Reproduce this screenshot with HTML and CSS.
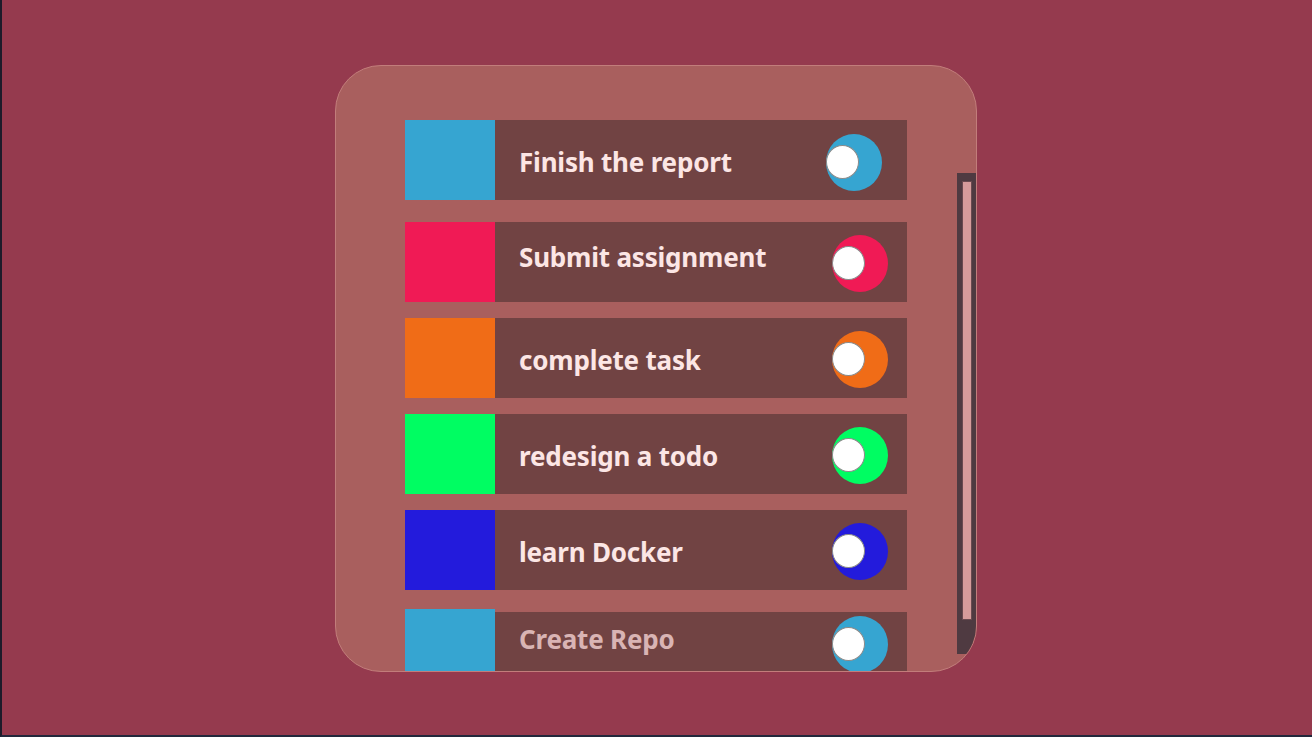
FILE: index.html
```html
<!DOCTYPE html>
<html>
<head>
<meta charset="utf-8">
<link rel="stylesheet" href="styles.css">
</head>
<body>
<div class="page">
  <div class="card">
    <div class="list">
      <div class="row first">
        <div class="swatch" style="background:#36a5d1"></div>
        <div class="label">Finish the report</div>
        <div class="toggle wide" style="background:#36a5d1"><span class="knob"></span></div>
      </div>
      <div class="row">
        <div class="swatch" style="background:#f01a55"></div>
        <div class="label up">Submit assignment</div>
        <div class="toggle" style="background:#f01a55"><span class="knob"></span></div>
      </div>
      <div class="row">
        <div class="swatch" style="background:#f06c17"></div>
        <div class="label">complete task</div>
        <div class="toggle" style="background:#f06c17"><span class="knob"></span></div>
      </div>
      <div class="row">
        <div class="swatch" style="background:#00fd62"></div>
        <div class="label">redesign a todo</div>
        <div class="toggle" style="background:#00fd62"><span class="knob"></span></div>
      </div>
      <div class="row">
        <div class="swatch" style="background:#231bdc"></div>
        <div class="label">learn Docker</div>
        <div class="toggle" style="background:#231bdc"><span class="knob"></span></div>
      </div>
      <div class="row last">
        <div class="swatch" style="background:#36a5d1"></div>
        <div class="label faded">Create Repo</div>
        <div class="toggle" style="background:#36a5d1"><span class="knob"></span></div>
      </div>
    </div>
    <div class="scrollbar"><div class="thumb"></div></div>
  </div>
</div>
</body>
</html>
```
FILE: styles.css
```css
html, body {
  margin: 0;
  padding: 0;
  height: 100%;
}
body {
  background: #953a4e;
  font-family: "Noto Sans", "Open Sans", sans-serif;
  overflow: hidden;
}
.page {
  height: 735px;
  border-left: 2px solid #1d1b2a;
  border-bottom: 2px solid #23283c;
  display: flex;
  align-items: center;
  justify-content: center;
  box-sizing: content-box;
}
.card {
  position: relative;
  width: 642px;
  height: 607px;
  margin-left: -2px;
  margin-top: 2px;
  background: #a95f5e;
  border: 1px solid #c27d7b;
  border-radius: 46px;
  overflow: hidden;
  padding: 54px 69px 0 69px;
  box-sizing: border-box;
}
.list {
  display: flex;
  flex-direction: column;
  gap: 16px;
}
.row {
  display: flex;
  align-items: center;
  height: 80px;
  background: #714343;
  flex-shrink: 0;
}
.row.first {
  margin-bottom: 6px;
}
.row.last {
  margin-top: 6px;
  align-items: flex-start;
}
.swatch {
  width: 90px;
  height: 100%;
  flex-shrink: 0;
}
.row.last .swatch {
  margin-top: -3px;
  height: 83px;
}
.label {
  padding-left: 24px;
  font-size: 26px;
  font-weight: 700;
  color: #fce6e5;
  letter-spacing: -0.2px;
  margin-top: 3px;
}
.label.up {
  margin-top: -10px;
}
.row.last .label {
  margin-top: 9px;
}
.label.faded {
  color: #d9b4b4;
}
.toggle {
  position: relative;
  margin-left: auto;
  margin-right: 19px;
  width: 56px;
  height: 57px;
  border-radius: 50%;
  flex-shrink: 0;
  margin-top: 2px;
}
.toggle.wide {
  margin-right: 25px;
  margin-top: 4px;
}
.row.last .toggle {
  margin-top: 4px;
}
.knob {
  position: absolute;
  left: 0;
  top: 11px;
  width: 33px;
  height: 34px;
  border-radius: 50%;
  background: #ffffff;
  border: 1px solid #8a8a8a;
  box-sizing: border-box;
}
.scrollbar {
  position: absolute;
  right: -1px;
  top: 107px;
  width: 20px;
  height: 481px;
  background: #4f3a41;
  box-sizing: border-box;
  padding: 8px 5px 0 5px;
}
.thumb {
  height: 439px;
  background: #d69b9b;
  border: 1px solid #6a4a50;
  box-sizing: border-box;
}
```
